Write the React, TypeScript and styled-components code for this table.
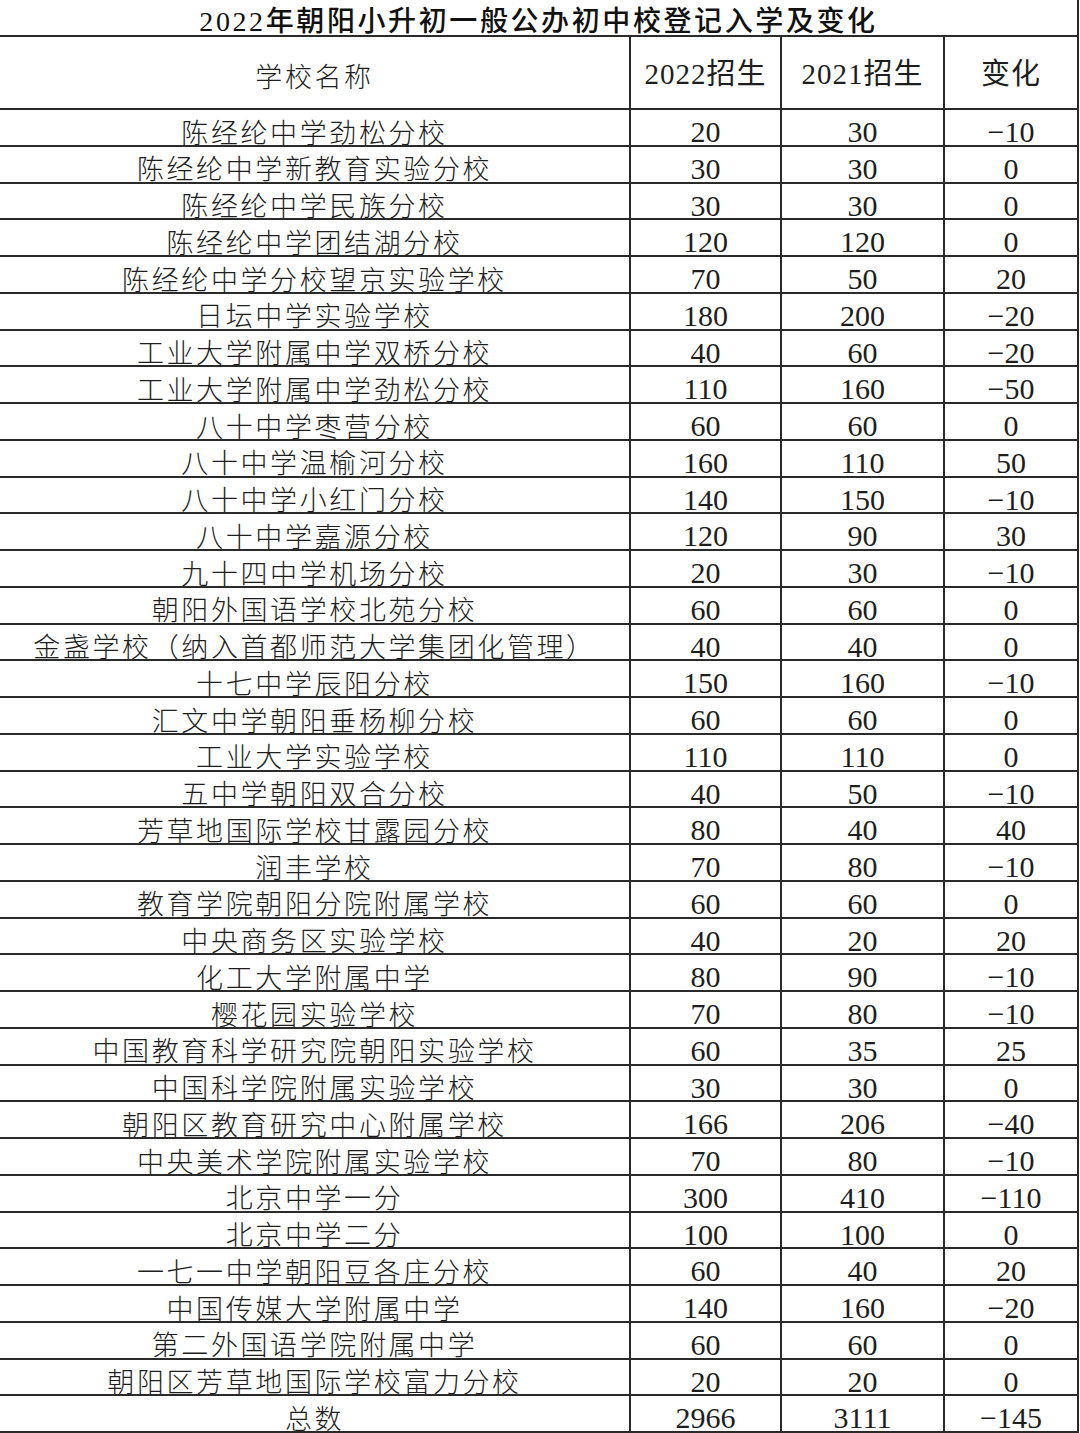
import React from 'react';
import styled, { createGlobalStyle } from 'styled-components';

const GlobalStyle = createGlobalStyle`
  html, body {
    margin: 0;
    padding: 0;
    background: #fff;
  }
`;

const LINE = '2px solid #2a2a2a';

const Sheet = styled.div`
  width: 1079px;
  border-right: ${LINE};
  box-sizing: border-box;
  background: #fff;
  color: #1e1e1e;
`;

const TitleRow = styled.div`
  height: 37px;
  box-sizing: border-box;
  border-bottom: ${LINE};
  display: flex;
  align-items: center;
  justify-content: center;
  padding-top: 2px;
  font-family: "Liberation Serif", "Noto Sans CJK SC", serif;
  font-size: 28px;
  font-weight: 500;
  letter-spacing: 2.6px;
  color: #111;
`;

const Row = styled.div<{ $height: number }>`
  display: grid;
  grid-template-columns: 629px 151px 163px 1fr;
  height: ${p => p.$height}px;
  box-sizing: border-box;
  border-bottom: ${LINE};
`;

const NameCell = styled.div`
  display: flex;
  align-items: center;
  justify-content: center;
  padding-top: 5px;
  font-family: "Noto Sans CJK SC", sans-serif;
  font-weight: 300;
  font-size: 27px;
  letter-spacing: 2.6px;
  line-height: 1;
  white-space: nowrap;
`;

const NumCell = styled.div`
  display: flex;
  align-items: center;
  justify-content: center;
  padding-top: 7px;
  border-left: ${LINE};
  font-family: "Liberation Serif", serif;
  font-size: 30px;
  line-height: 1;
  white-space: nowrap;
`;

const HeadNum = styled(NumCell)`
  padding-top: 4px;
  font-family: "Liberation Serif", "Noto Sans CJK SC", serif;
  font-size: 29px;
  letter-spacing: 1px;
`;

const schools: [string, number, number, number][] = [
  ['陈经纶中学劲松分校', 20, 30, -10],
  ['陈经纶中学新教育实验分校', 30, 30, 0],
  ['陈经纶中学民族分校', 30, 30, 0],
  ['陈经纶中学团结湖分校', 120, 120, 0],
  ['陈经纶中学分校望京实验学校', 70, 50, 20],
  ['日坛中学实验学校', 180, 200, -20],
  ['工业大学附属中学双桥分校', 40, 60, -20],
  ['工业大学附属中学劲松分校', 110, 160, -50],
  ['八十中学枣营分校', 60, 60, 0],
  ['八十中学温榆河分校', 160, 110, 50],
  ['八十中学小红门分校', 140, 150, -10],
  ['八十中学嘉源分校', 120, 90, 30],
  ['九十四中学机场分校', 20, 30, -10],
  ['朝阳外国语学校北苑分校', 60, 60, 0],
  ['金盏学校（纳入首都师范大学集团化管理）', 40, 40, 0],
  ['十七中学辰阳分校', 150, 160, -10],
  ['汇文中学朝阳垂杨柳分校', 60, 60, 0],
  ['工业大学实验学校', 110, 110, 0],
  ['五中学朝阳双合分校', 40, 50, -10],
  ['芳草地国际学校甘露园分校', 80, 40, 40],
  ['润丰学校', 70, 80, -10],
  ['教育学院朝阳分院附属学校', 60, 60, 0],
  ['中央商务区实验学校', 40, 20, 20],
  ['化工大学附属中学', 80, 90, -10],
  ['樱花园实验学校', 70, 80, -10],
  ['中国教育科学研究院朝阳实验学校', 60, 35, 25],
  ['中国科学院附属实验学校', 30, 30, 0],
  ['朝阳区教育研究中心附属学校', 166, 206, -40],
  ['中央美术学院附属实验学校', 70, 80, -10],
  ['北京中学一分', 300, 410, -110],
  ['北京中学二分', 100, 100, 0],
  ['一七一中学朝阳豆各庄分校', 60, 40, 20],
  ['中国传媒大学附属中学', 140, 160, -20],
  ['第二外国语学院附属中学', 60, 60, 0],
  ['朝阳区芳草地国际学校富力分校', 20, 20, 0],
];

// minus sign in the sheet is a long dash
const fmt = (n: number) => (n < 0 ? '−' + Math.abs(n) : String(n));

const App: React.FC = () => {
  const total22 = schools.reduce((s, r) => s + r[1], 0);
  const total21 = schools.reduce((s, r) => s + r[2], 0);

  return (
    <>
      <GlobalStyle />
      <Sheet>
        <TitleRow>2022年朝阳小升初一般公办初中校登记入学及变化</TitleRow>
        <Row $height={73}>
          <NameCell>学校名称</NameCell>
          <HeadNum>2022招生</HeadNum>
          <HeadNum>2021招生</HeadNum>
          <HeadNum>变化</HeadNum>
        </Row>
        {schools.map(([name, a, b, c]) => (
          <Row key={name} $height={36.75}>
            <NameCell>{name}</NameCell>
            <NumCell>{a}</NumCell>
            <NumCell>{b}</NumCell>
            <NumCell>{fmt(c)}</NumCell>
          </Row>
        ))}
        <Row $height={36.75}>
          <NameCell>总数</NameCell>
          <NumCell>{total22}</NumCell>
          <NumCell>{total21}</NumCell>
          <NumCell>{fmt(total22 - total21)}</NumCell>
        </Row>
      </Sheet>
    </>
  );
};

export default App;
